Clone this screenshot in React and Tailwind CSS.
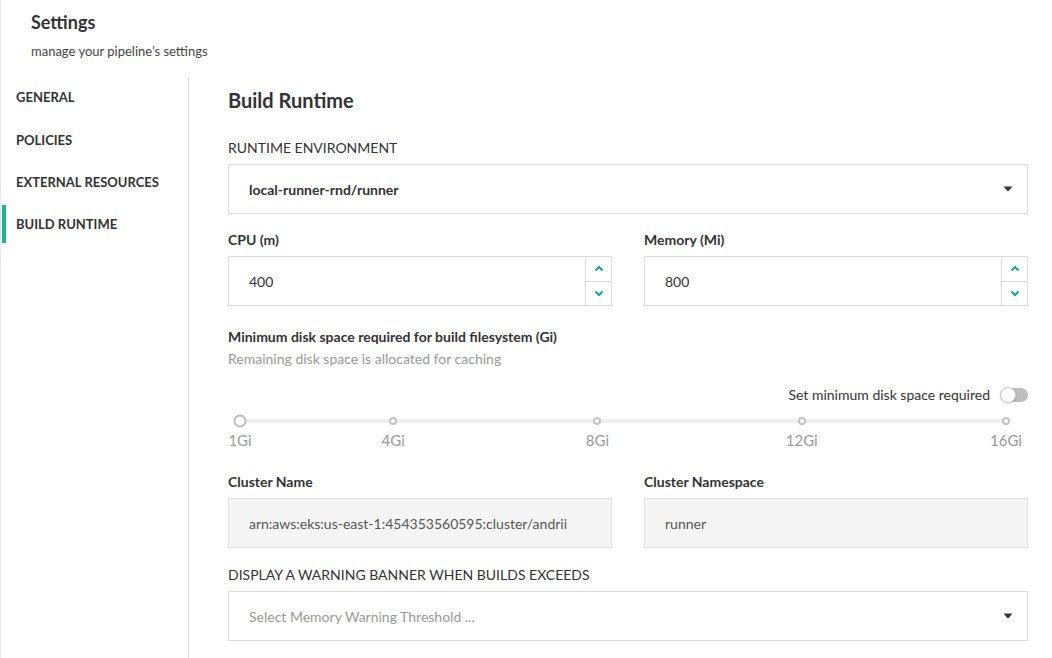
import React from "react";

const font = { fontFamily: "Lato, 'Open Sans', sans-serif" };

function Caret() {
  return (
    <svg width="10" height="6" viewBox="0 0 10 6" className="shrink-0">
      <path d="M0.5 0.5 L9.5 0.5 L5 5.5 Z" fill="#333" />
    </svg>
  );
}

function Chevron({ up }) {
  return (
    <svg width="10" height="7" viewBox="0 0 10 7">
      <path
        d={up ? "M1.5 5.5 L5 2 L8.5 5.5" : "M1.5 1.5 L5 5 L8.5 1.5"}
        fill="none"
        stroke="#1aa58f"
        strokeWidth="2"
      />
    </svg>
  );
}

function NumberInput({ label, value }) {
  return (
    <div className="flex flex-col">
      <div className="text-[14px] font-bold text-[#333] h-[18px] leading-[18px]">{label}</div>
      <div className="mt-[7px] h-[50px] border border-[#dcdcdc] flex">
        <div className="flex-1 flex items-center pl-[20px] text-[14px] text-[#333]">{value}</div>
        <div className="w-[26px] border-l border-[#dcdcdc] flex flex-col">
          <div className="flex-1 flex items-center justify-center border-b border-[#dcdcdc]">
            <Chevron up />
          </div>
          <div className="flex-1 flex items-center justify-center">
            <Chevron />
          </div>
        </div>
      </div>
    </div>
  );
}

function ReadOnly({ label, value }) {
  return (
    <div className="flex flex-col">
      <div className="text-[14px] font-bold text-[#333] h-[18px] leading-[18px]">{label}</div>
      <div className="mt-[7px] h-[50px] border border-[#e2e2e2] bg-[#f5f5f5] flex items-center pl-[20px] text-[14px] text-[#555]">
        {value}
      </div>
    </div>
  );
}

const marks = [1, 4, 8, 12, 16];

export default function App() {
  return (
    <div style={font} className="w-[1052px] h-[658px] bg-white text-[#333] flex flex-col border-l border-[#e6e6e6] overflow-hidden">
      <div className="pl-[30px] pt-[11px] h-[77px]">
        <div className="text-[18px] font-bold leading-[22px] text-[#333]">Settings</div>
        <div className="text-[13px] leading-[16px] mt-[10px] text-[#444]">manage your pipeline’s settings</div>
      </div>
      <div className="flex flex-1">
        <div className="w-[188px] border-r border-[#dcdcdc]">
          {["GENERAL", "POLICIES", "EXTERNAL RESOURCES", "BUILD RUNTIME"].map((t, i) => (
            <div key={t} className="relative h-[42.3px] flex items-center pl-[15px] text-[13px] font-bold text-[#333]">
              {i === 3 && <div className="absolute left-[1px] top-[1px] bottom-[3px] w-[4px] bg-[#1ab394]" />}
              {t}
            </div>
          ))}
        </div>
        <div className="flex-1 pl-[39px] pr-[24px] pt-[11px]">
          <div className="text-[20px] font-bold leading-[24px] text-[#333]">Build Runtime</div>
          <div className="mt-[27px] text-[14px] leading-[18px] text-[#333]">RUNTIME ENVIRONMENT</div>
          <div className="mt-[7px] h-[50px] border border-[#dcdcdc] flex items-center justify-between pl-[20px] pr-[14px]">
            <span className="text-[14px] font-bold text-[#333]">local-runner-rnd/runner</span>
            <Caret />
          </div>
          <div className="mt-[17px] grid grid-cols-2 gap-[32px]">
            <NumberInput label="CPU (m)" value="400" />
            <NumberInput label="Memory (Mi)" value="800" />
          </div>
          <div className="mt-[22px] text-[14px] font-bold leading-[18px] text-[#333]">
            Minimum disk space required for build filesystem (Gi)
          </div>
          <div className="mt-[4px] text-[14px] leading-[18px] text-[#999]">Remaining disk space is allocated for caching</div>
          <div className="mt-[18px] h-[18px] flex items-center justify-end gap-[10px]">
            <span className="text-[14px] leading-[18px] text-[#333]">Set minimum disk space required</span>
            <div className="relative w-[28px] h-[14px] rounded-full bg-[#bdbdbd]">
              <div className="absolute left-0 top-[-1px] w-[16px] h-[16px] rounded-full bg-white border border-[#ccc] shadow" />
            </div>
          </div>
          <div className="mt-[10px] pl-[12px] pr-[22px]">
            <div className="relative h-[14px]">
              <div className="absolute left-0 right-0 top-[5px] h-[4px] bg-[#eeeeee] rounded" />
              {marks.map((m, i) => (
                <div
                  key={m}
                  className="absolute top-[7px] -translate-x-1/2 -translate-y-1/2"
                  style={{ left: `${((m - 1) / 15) * 100}%` }}
                >
                  {i === 0 ? (
                    <div className="w-[13px] h-[13px] rounded-full border-2 border-[#bbbbbb] bg-white" />
                  ) : (
                    <div className="w-[8px] h-[8px] rounded-full border-2 border-[#c4c4c4] bg-white" />
                  )}
                </div>
              ))}
            </div>
            <div className="relative h-[18px] mt-[3px]">
              {marks.map((m) => (
                <div
                  key={m}
                  className="absolute top-0 -translate-x-1/2 text-[15px] leading-[18px] text-[#999]"
                  style={{ left: `${((m - 1) / 15) * 100}%` }}
                >
                  {m}Gi
                </div>
              ))}
            </div>
          </div>
          <div className="mt-[24px] grid grid-cols-2 gap-[32px]">
            <ReadOnly label="Cluster Name" value="arn:aws:eks:us-east-1:454353560595:cluster/andrii" />
            <ReadOnly label="Cluster Namespace" value="runner" />
          </div>
          <div className="mt-[18px] text-[14px] leading-[18px] text-[#333]">DISPLAY A WARNING BANNER WHEN BUILDS EXCEEDS</div>
          <div className="mt-[7px] h-[50px] border border-[#dcdcdc] flex items-center justify-between pl-[20px] pr-[14px]">
            <span className="text-[14px] text-[#999]">Select Memory Warning Threshold ...</span>
            <Caret />
          </div>
        </div>
      </div>
    </div>
  );
}
